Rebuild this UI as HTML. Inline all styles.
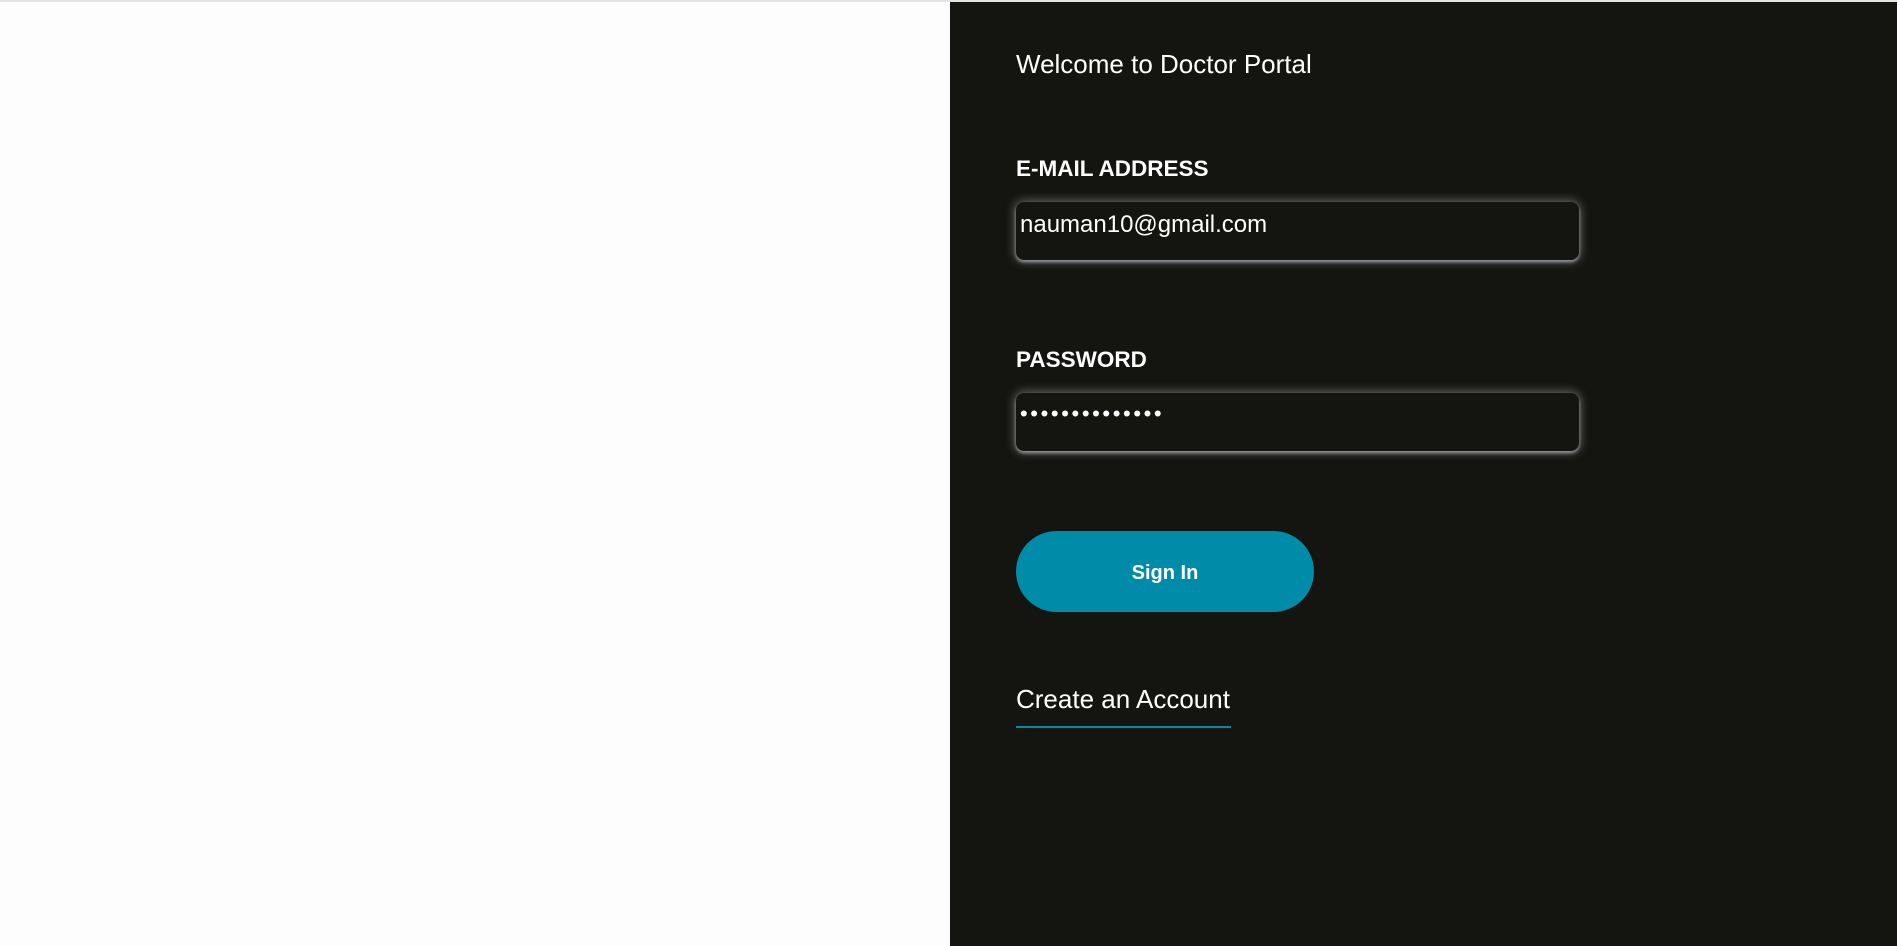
<!DOCTYPE html>
<html><head><style>
html,body{margin:0;padding:0;width:1897px;height:946px;overflow:hidden;background:#fdfdfd;font-family:"Segoe UI","Liberation Sans",sans-serif}
.top{position:absolute;left:0;top:0;width:1897px;height:2px;background:#e3e3e3}
.panel{position:absolute;left:950px;top:2px;width:947px;height:944px;background:#141410;color:#fff}
.t{position:absolute;left:1016px;white-space:nowrap;color:#fff}
.box{position:absolute;left:1016px;width:563px;height:58px;background:#141410;border-radius:8px;box-shadow:0 0 10px 1px rgba(200,200,200,.5),0 2px 3px rgba(140,150,160,.9);box-sizing:border-box}
.btn{position:absolute;left:1016px;top:531px;width:298px;height:81px;border-radius:41px;background:#008ba8;color:#fff;font-weight:bold;font-size:20px;text-align:center;line-height:85px}
</style></head><body>
<div class="top"></div>
<div class="panel"></div>
<div class="t" style="top:49px;font-size:26px">Welcome to Doctor Portal</div>
<div class="t" style="top:156px;font-size:22.5px;font-weight:bold">E-MAIL ADDRESS</div>
<div class="box" style="top:202px"></div>
<div class="t" style="left:1020px;top:211px;font-size:24px;font-weight:300">nauman10@gmail.com</div>
<div class="t" style="top:347px;font-size:22.5px;font-weight:bold">PASSWORD</div>
<div class="box" style="top:393px"></div>
<div class="t" style="left:1020px;top:401px;font-size:22px;letter-spacing:2.6px">••••••••••••••</div>
<div class="btn">Sign In</div>
<div class="t" style="top:684px;font-size:26px">Create an Account</div>
<div style="position:absolute;left:1016px;top:726px;width:215px;height:2px;background:#008ba8"></div>
</body></html>
